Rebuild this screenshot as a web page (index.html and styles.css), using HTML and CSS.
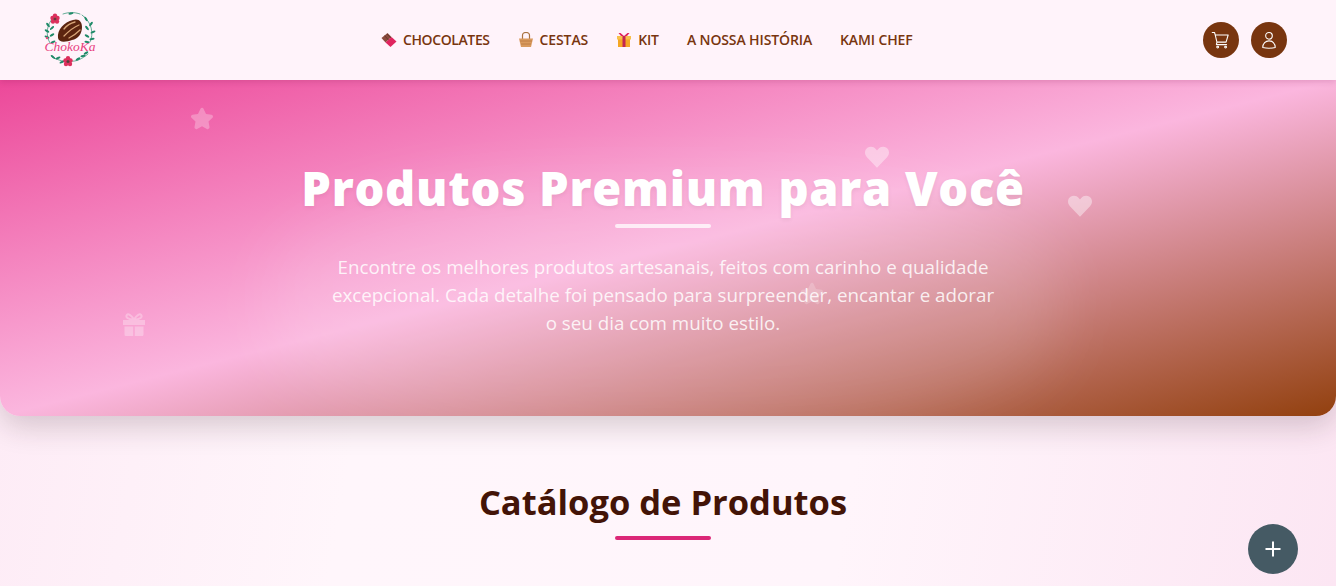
FILE: index.html
```html
<!DOCTYPE html>
<html lang="pt">
<head>
<meta charset="utf-8">
<title>ChokoKa</title>
<link rel="stylesheet" href="styles.css">
</head>
<body>
<header class="topbar">
  <a class="logo" href="#" aria-label="ChokoKa">
    <svg viewBox="0 0 52 56" width="52" height="56">
      <g fill="none" stroke="#3d9a7c" stroke-width=".8" stroke-linecap="round">
        <path d="M6 31C1 23 3 12 9 6"/>
        <path d="M46 30C50 22 48 10 38 3"/>
        <path d="M7 44C14 49 22 50 26 49C32 50 38 47 44 42"/>
        <path d="M19 2C25 0 30 0 36 2"/>
      </g>
      <g fill="#1f8a68">
        <ellipse cx="3" cy="19" rx="2.600" ry="1.100" transform="rotate(30 3 19)"/>
        <ellipse cx="8" cy="16" rx="2.600" ry="1.100" transform="rotate(-40 8 16)"/>
        <ellipse cx="3" cy="25" rx="2.600" ry="1.100" transform="rotate(20 3 25)"/>
        <ellipse cx="8" cy="23" rx="2.600" ry="1.100" transform="rotate(-30 8 23)"/>
        <ellipse cx="9" cy="30" rx="2.600" ry="1.100" transform="rotate(-20 9 30)"/>
        <ellipse cx="4" cy="13" rx="2.600" ry="1.100" transform="rotate(50 4 13)"/>
        <ellipse cx="42" cy="7" rx="2.600" ry="1.100" transform="rotate(60 42 7)"/>
        <ellipse cx="47" cy="12" rx="2.600" ry="1.100" transform="rotate(-50 47 12)"/>
        <ellipse cx="43" cy="16" rx="2.600" ry="1.100" transform="rotate(50 43 16)"/>
        <ellipse cx="49" cy="20" rx="2.600" ry="1.100" transform="rotate(-20 49 20)"/>
        <ellipse cx="43" cy="24" rx="2.600" ry="1.100" transform="rotate(30 43 24)"/>
        <ellipse cx="48" cy="27" rx="2.600" ry="1.100" transform="rotate(-10 48 27)"/>
        <ellipse cx="43" cy="30" rx="2.600" ry="1.100" transform="rotate(10 43 30)"/>
        <ellipse cx="9" cy="45" rx="2.600" ry="1.100" transform="rotate(40 9 45)"/>
        <ellipse cx="14" cy="46" rx="2.600" ry="1.100" transform="rotate(-20 14 46)"/>
        <ellipse cx="18" cy="50" rx="2.600" ry="1.100" transform="rotate(-20 18 50)"/>
        <ellipse cx="34" cy="47" rx="2.600" ry="1.100" transform="rotate(-30 34 47)"/>
        <ellipse cx="39" cy="44" rx="2.600" ry="1.100" transform="rotate(-10 39 44)"/>
        <ellipse cx="42" cy="41" rx="2.600" ry="1.100" transform="rotate(-30 42 41)"/>
        <ellipse cx="27" cy="1.500" rx="2.600" ry="1" transform="rotate(-10 27 1.500)"/>
      </g>
      <path d="M14 26C13 18 20 10 29 8C35 6 38 10 38 15C38 22 34 27 28 28C22 30 15 31 14 26Z" fill="#5b2410"/>
      <g fill="none" stroke="#d9a679" stroke-width="1.300" stroke-linecap="round">
        <path d="M20 17C23 13 27 11 31 10"/>
        <path d="M20 24C25 19 30 15 35 13"/>
        <path d="M25 26C29 24 33 21 36 18"/>
      </g>
      <g fill="#dc2f5c">
        <circle cx="8.500" cy="6" r="2.200"/><circle cx="13.500" cy="6" r="2.200"/><circle cx="11" cy="3.800" r="2.200"/><circle cx="9" cy="9.500" r="2.200"/><circle cx="13" cy="9.500" r="2.200"/>
        <circle cx="21.500" cy="48.500" r="2.200"/><circle cx="26.500" cy="48.500" r="2.200"/><circle cx="24" cy="46.300" r="2.200"/><circle cx="22" cy="52" r="2.200"/><circle cx="26" cy="52" r="2.200"/>
      </g>
      <circle cx="11" cy="7" r="1.500" fill="#6b3a3a"/>
      <circle cx="24" cy="49.500" r="1.500" fill="#5a3a3a"/>
      <circle cx="3" cy="26" r="1.200" fill="#e14e7c"/>
      <text class="logo-word" x="26" y="39" text-anchor="middle">ChokoKa</text>
    </svg>
  </a>
  <nav class="menu">
    <a href="#" class="tight"><svg class="emoji" viewBox="0 0 16 16"><path d="M0.500 6 6.500 1l4 4-6 5.500Z" fill="#8a4a3c"/><path d="M4.500 10.500l6-5.500 5 4.500-6 5.500Z" fill="#e0245e"/><path d="M3.500 3.500 7.500 8M6 2l4 4" stroke="#5d2e26" stroke-width=".7"/></svg>CHOCOLATES</a>
    <a href="#"><svg class="emoji" viewBox="0 0 16 16"><path d="M4.500 7V3.500a3.500 3 0 0 1 7 0V7" fill="none" stroke="#a9713f" stroke-width="1.200"/><path d="M1 6.500h14l-2 8.500H3Z" fill="#d99a5e"/><path d="M2 9h12M3 12h10" stroke="#b9773f" stroke-width=".8"/></svg>CESTAS</a>
    <a href="#"><svg class="emoji" viewBox="0 0 16 16"><rect x="2" y="6" width="12" height="9" fill="#f5a623"/><rect x="1" y="4" width="14" height="3.500" fill="#f8c04a"/><rect x="6.500" y="4" width="3" height="11" fill="#c4254f"/><path d="M8 4 4.500 1h-2L5 4Zm0 0 3.500-3h2L11 4Z" fill="#e0245e"/></svg>KIT</a>
    <a href="#">A NOSSA HISTÓRIA</a>
    <a href="#">KAMI CHEF</a>
  </nav>
  <div class="actions">
    <button class="round-btn" aria-label="Carrinho">
      <svg viewBox="0 0 24 24" class="line-icon"><path d="M1.500 3h2.700l.9 3m0 0 2 8.500h11l2.500-8.500Zm2 8.500-.6 3h12.200"/><circle cx="8" cy="20.500" r="1.100"/><circle cx="17.500" cy="20.500" r="1.100"/></svg>
    </button>
    <button class="round-btn" aria-label="Conta">
      <svg viewBox="0 0 24 24" class="line-icon"><circle cx="12" cy="7" r="4"/><path d="M4.500 21c0-5 3.500-8 7.500-8s7.500 3 7.500 8c-4.500 1-10.500 1-15 0Z"/></svg>
    </button>
  </div>
</header>

<section class="hero">
  <div class="hero-glow"></div>
  <svg class="float star" viewBox="0 0 24 24"><path d="M12 1.800c.7 0 1.200.4 1.500 1l2.500 5.100 5.500.8c1.500.2 2 2 1 3l-4 3.900 1 5.500c.2 1.500-1.300 2.500-2.600 1.800L12 20.300l-4.900 2.600c-1.300.7-2.800-.3-2.600-1.800l1-5.500-4-3.900c-1-1-.5-2.800 1-3l5.500-.8 2.500-5.100c.3-.6.800-1 1.500-1Z"/></svg>
  <svg class="float heart-a" viewBox="1 2 22 21"><path d="M12 22 2.800 12.300C.2 9.500.5 5.500 3.300 3.600 5.800 2 9 2.500 10.800 4.700L12 6.100l1.200-1.400C15 2.500 18.200 2 20.700 3.600c2.800 1.900 3.100 5.900.5 8.700Z"/></svg>
  <svg class="float heart-b" viewBox="1 2 22 21"><path d="M12 22 2.800 12.300C.2 9.500.5 5.500 3.300 3.600 5.800 2 9 2.500 10.800 4.700L12 6.100l1.200-1.400C15 2.500 18.200 2 20.700 3.600c2.800 1.900 3.100 5.900.5 8.700Z"/></svg>
  <svg class="float gift" viewBox="0 0 24 24"><path d="M1 7h22v5H1ZM2.500 13.500h8.700V23H4a1.500 1.500 0 0 1-1.500-1.500ZM12.800 13.500h8.700v8a1.500 1.500 0 0 1-1.500 1.500h-7.200Z"/><path d="M12 6.500C9 1.500 6 .5 4.800 2c-1.300 2 .5 4.500 7.200 4.500Zm0 0c3-5 6-6 7.200-4.500 1.300 2-.5 4.500-7.200 4.500Z" fill="none" stroke="#fff" stroke-width="2"/></svg>
  <svg class="float star-b" viewBox="0 0 24 24"><path d="M12 1.800c.7 0 1.200.4 1.500 1l2.500 5.100 5.500.8c1.500.2 2 2 1 3l-4 3.900 1 5.500c.2 1.500-1.300 2.500-2.600 1.800L12 20.300l-4.900 2.600c-1.300.7-2.800-.3-2.600-1.800l1-5.500-4-3.900c-1-1-.5-2.800 1-3l5.500-.8 2.500-5.100c.3-.6.800-1 1.500-1Z"/></svg>
  <h1>Produtos Premium para Você</h1>
  <span class="rule rule-light"></span>
  <p>Encontre os melhores produtos artesanais, feitos com carinho e qualidade excepcional. Cada detalhe foi pensado para surpreender, encantar e adorar o seu dia com muito estilo.</p>
</section>

<main class="catalog">
  <h2>Catálogo de Produtos</h2>
  <span class="rule rule-pink"></span>
</main>

<button class="fab" aria-label="Adicionar">
  <svg viewBox="0 0 24 24"><path d="M12 4.500v15M4.500 12h15"/></svg>
</button>
</body>
</html>
```
FILE: styles.css
```css
* { box-sizing: border-box; }
html, body { margin: 0; height: 100%; overflow: hidden; }
body {
  font-family: "Open Sans", "Liberation Sans", sans-serif;
  background: linear-gradient(100deg, #fdeaf5 0%, #fff6fb 30%, #fff5fb 65%, #fce6f3 100%);
}
.topbar {
  height: 80px;
  background: #fff3fa;
  display: flex;
  align-items: center;
  padding: 0 49px 0 44px;
  position: relative;
  z-index: 2;
  box-shadow: 0 2px 6px rgba(120, 20, 80, .18);
}
.logo { display: block; height: 56px; }
.logo-word { font: italic 13.5px "Liberation Serif", serif; fill: #e8417f; }
.menu { display: flex; align-items: center; gap: 28px; margin-left: 285px; }
.menu a {
  display: flex;
  align-items: center;
  gap: 6px;
  color: #78350f;
  font-size: 14px;
  line-height: 18px;
  font-weight: 600;
  letter-spacing: -.12px;
  text-decoration: none;
  white-space: nowrap;
  margin-top: -1px;
}
.menu a.tight { letter-spacing: -.4px; }
.emoji { width: 16px; height: 16px; }
.actions { display: flex; gap: 12px; margin-left: auto; }
.round-btn {
  width: 36px;
  height: 36px;
  border: 0;
  border-radius: 50%;
  background: #78350f;
  padding: 0;
  display: flex;
  align-items: center;
  justify-content: center;
}
.line-icon { width: 20px; height: 20px; fill: none; stroke: #fff; stroke-width: 1.3; stroke-linejoin: round; stroke-linecap: round; }
.hero {
  height: 336px;
  position: relative;
  overflow: hidden;
  display: flex;
  flex-direction: column;
  align-items: center;
  padding: 76px 10px 0 0;
  border-radius: 0 0 20px 20px;
  background: linear-gradient(to bottom right, #ec4899 0%, #fbb6de 50%, #92400e 100%);
  box-shadow: 0 10px 30px rgba(50, 25, 35, .2);
  color: #fff;
}
.hero-glow {
  position: absolute;
  left: 270px;
  top: 100px;
  width: 790px;
  height: 250px;
  background: rgba(255, 255, 255, .12);
  filter: blur(32px);
  border-radius: 40%;
}
.hero h1 {
  position: relative;
  margin: 0;
  font-size: 47px;
  line-height: 64px;
  font-weight: 800;
  letter-spacing: .7px;
  text-shadow: 0 2px 4px rgba(0, 0, 0, .06);
}
.rule { display: block; width: 96px; height: 4px; border-radius: 2px; }
.rule-light { background: rgba(255, 255, 255, .75); position: relative; margin-top: 4px; }
.rule-pink { background: #db2777; margin-top: 9px; }
.hero p {
  position: relative;
  margin: 25px 0 0;
  width: 672px;
  font-size: 18.8px;
  line-height: 28px;
  text-align: center;
  color: rgba(255, 255, 255, .85);
}
.float { position: absolute; fill: #fff; }
.star { left: 190px; top: 26px; width: 24px; height: 24px; opacity: .28; }
.heart-a { left: 865px; top: 66px; width: 24px; height: 23px; opacity: .4; }
.heart-b { left: 1068px; top: 115px; width: 24px; height: 23px; opacity: .42; }
.gift { left: 122px; top: 233px; width: 24px; height: 24px; opacity: .3; }
.star-b { left: 800px; top: 201px; width: 24px; height: 24px; opacity: .2; }
.catalog { display: flex; flex-direction: column; align-items: center; padding: 61px 10px 0 0; }
.catalog h2 {
  margin: 0;
  font-size: 34.5px;
  line-height: 50px;
  font-weight: 700;
  color: #431407;
}
.fab {
  position: fixed;
  right: 38px;
  bottom: 12px;
  width: 50px;
  height: 50px;
  border: 0;
  border-radius: 50%;
  background: #455a64;
  padding: 0;
  display: flex;
  align-items: center;
  justify-content: center;
}
.fab svg { width: 24px; height: 24px; fill: none; stroke: #fff; stroke-width: 2; }
```
